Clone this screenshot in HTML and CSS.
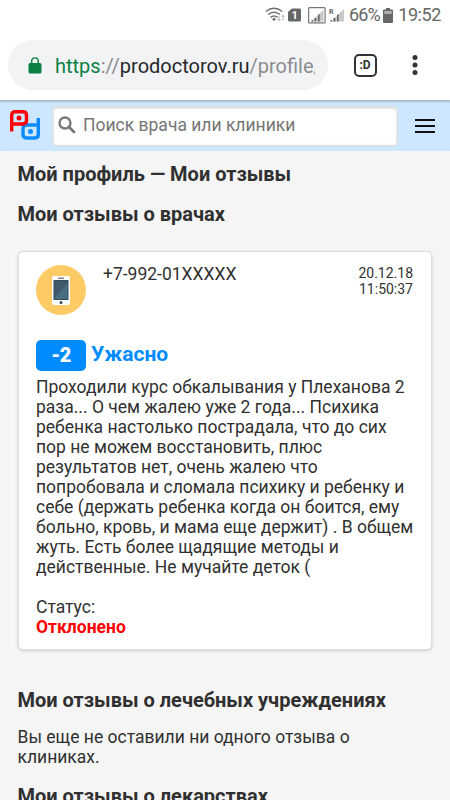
FILE: index.html
```html
<!DOCTYPE html>
<html lang="ru">
<head>
<meta charset="utf-8">
<title>Мои отзывы</title>
<link rel="stylesheet" href="styles.css">
</head>
<body>
<div class="status">
  <svg class="status-icons" width="82" height="24" viewBox="0 0 82 24">
    <g fill="none" stroke="#707070" stroke-width="1.5">
      <path d="M.8 8.500Q9 2 17.200 8.500"/><path d="M3 11.500Q9 6.800 15 11.500"/><path d="M5.500 14.300Q9 11.500 12.500 14.300"/>
    </g>
    <circle cx="9" cy="16.300" r="1.500" fill="#707070"/>
    <path d="M14 13v4.500m-1.500-1.500 1.500 1.700 1.500-1.700M18 17.500v-5m-1.500 1.500 1.500-1.700 1.500 1.700" fill="none" stroke="#aaa" stroke-width=".9"/>
    <path d="M27 5.500h7.500q1.500 0 1.500 1.500v10q0 1.500-1.500 1.500h-10q-1.500 0-1.500-1.500V9z" fill="#666"/>
    <text x="26.500" y="16" class="sim">1</text>
    <rect x="43.600" y="4.600" width="16.500" height="15.300" rx="1" fill="none" stroke="#777" stroke-width="1.200"/>
    <path d="M58.500 6.500v12H46.500z" fill="#c8c8c8"/>
    <path d="M46.500 17h1.500v1.500h-1.500zM49.500 15h1.800v3.500h-1.800zM53 11.500h1.600v7H53z" fill="#666"/>
    <path d="M79 6v12.500H66z" fill="#c8c8c8"/>
    <path d="M65.500 17h1.500v1.500h-1.500zM68.500 15h1.800v3.500h-1.800zM72 11.500h1.600v7H72z" fill="#666"/>
    <text x="64" y="10.500" class="roam">R</text>
  </svg>
  <span class="percent">66%</span>
  <svg class="battery" width="10" height="15" viewBox="0 0 10 15"><path d="M3 0h4v1.500h2q1 0 1 1V14q0 1-1 1H1q-1 0-1-1V2.500q0-1 1-1h2z" fill="#666"/><path d="M1.300 3h7.400v3H1.300z" fill="#b0b0b0"/></svg>
  <span class="clock">19:52</span>
</div>
<div class="browser">
  <div class="address">
    <svg width="14" height="17" viewBox="0 0 14 17"><rect x=".5" y="6" width="13" height="10.500" rx="1.500" fill="#0b8043"/><path d="M3.700 7V4.200a3.300 3.300 0 0 1 6.600 0V7" fill="none" stroke="#0b8043" stroke-width="1.400"/></svg>
    <div class="url"><span class="secure">https</span><span class="muted">://</span>prodoctorov.ru<span class="muted">/profile/</span></div>
  </div>
  <div class="tabs">:D</div>
  <svg class="dots" width="6" height="20" viewBox="0 0 6 20" fill="#303438"><circle cx="3" cy="2.500" r="2.500"/><circle cx="3" cy="10" r="2.500"/><circle cx="3" cy="17.500" r="2.500"/></svg>
</div>
<header class="site">
  <svg class="logo" width="30" height="30" viewBox="0 0 30 30" fill="none" stroke-width="3.400">
    <path d="M28.300 8v16.500q0 3.500-3.500 3.500H16.500q-3.500 0-3.500-3.500V18.500q0-3.500 3.500-3.500H28" stroke="#0c8bff"/>
    <path d="M1.700 21.500V5.200q0-3.500 3.500-3.500H13q3.500 0 3.500 3.500V10.500q0 3.500-3.500 3.500H2" stroke="#ff000a"/>
    <circle cx="9" cy="8" r="2.500" fill="#ff000a"/><circle cx="20.500" cy="21.500" r="2.500" fill="#0c8bff"/>
  </svg>
  <div class="search">
    <svg width="18" height="18" viewBox="0 0 18 18" fill="none" stroke="#777"><circle cx="7" cy="7" r="5.500" stroke-width="2.300"/><path d="m11 11 5 5" stroke-width="2.800" stroke-linecap="round"/></svg>
    <span>Поиск врача или клиники</span>
  </div>
  <svg class="menu" width="20" height="14" viewBox="0 0 20 14"><path d="M0 1h20M0 7h20M0 13h20" stroke="#111" stroke-width="2"/></svg>
</header>
<main>
  <h1>Мой профиль — Мои отзывы</h1>
  <h2>Мои отзывы о врачах</h2>
  <article class="card">
    <div class="card-head">
      <svg width="50" height="50" viewBox="0 0 50 50"><circle cx="25" cy="25" r="25" fill="#fdcb66"/><rect x="16" y="11" width="18" height="29" rx="2" fill="#fff"/><path d="M17.500 15h15v20h-15z" fill="#334a5e"/><path d="M18.500 16h13v18h-13z" fill="#40596b"/><path d="M31.500 18v16h-13v-1z" fill="#476d80"/><path d="M22 12.500h6V14h-6z" fill="#84868a"/><circle cx="25" cy="37.400" r="1.500" fill="#334a5e"/></svg>
      <span class="phone">+7-992-01XXXXX</span>
      <time>20.12.18<br>11:50:37</time>
    </div>
    <div class="rating"><b class="score">-2</b><b class="verdict">Ужасно</b></div>
    <p class="review">Проходили курс обкалывания у Плеханова 2<br>раза... О чем жалею уже 2 года... Психика<br>ребенка настолько пострадала, что до сих<br>пор не можем восстановить, плюс<br>результатов нет, очень жалею что<br>попробовала и сломала психику и ребенку и<br>себе (держать ребенка когда он боится, ему<br>больно, кровь, и мама еще держит) . В общем<br>жуть. Есть более щадящие методы и<br>действенные. Не мучайте деток (</p>
    <p class="state">Статус:<br><b>Отклонено</b></p>
  </article>
  <h2 class="clinics">Мои отзывы о лечебных учреждениях</h2>
  <p class="empty">Вы еще не оставили ни одного отзыва о<br>клиниках.</p>
  <h2 class="drugs">Мои отзывы о лекарствах</h2>
</main>
</body>
</html>
```
FILE: styles.css
```css
* { box-sizing: border-box; }
html, body { margin: 0; height: 800px; overflow: hidden; }
body { font: 17.5px/20px Roboto, sans-serif; color: #303030; background: #f5f5f5; white-space: nowrap; }
h1, h2, p { margin: 0; }
svg { flex: none; display: block; }
.status { height: 30px; background: #fff; display: flex; align-items: center; padding: 0 9px 0 265px; color: #666; font-size: 18px; }
.sim { font: bold 11px Roboto, sans-serif; fill: #fff; }
.roam { font: bold 7px Roboto, sans-serif; fill: #666; }
.percent { width: 34px; margin-left: 2px; letter-spacing: -.9px; }
.clock { letter-spacing: -.4px; }
.battery { margin: 1px 5px 0 1px; }
.browser { height: 70px; background: #fff; display: flex; align-items: center; padding-left: 8px; }
.address { width: 320px; height: 50px; border-radius: 25px; background: #f1f3f5; display: flex; align-items: center; padding-left: 20px; }
.url { width: 260px; margin-left: 13px; padding-top: 1px; overflow: hidden; font-size: 20px; line-height: 26px; color: #26282b; }
.secure { color: #0b8043; }
.muted { color: #8b8d90; }
.tabs { width: 23px; height: 23px; margin-left: 25.5px; border: 2px solid #303438; border-radius: 5px; font: bold 12px/19px Roboto, sans-serif; text-align: center; }
.dots { margin-left: 35.5px; }
.site { height: 51px; background: #cce7ff; display: flex; align-items: center; padding-left: 10px; box-shadow: inset 0 3px 2px -1px #a9bdcd; }
.logo { margin-bottom: 2px; }
.search { width: 346px; height: 40px; margin: 0 17px 0 12px; padding: 0 0 2px 5px; border: 1px solid #ddd; border-radius: 4px; background: #fff; box-shadow: inset 0 1px 3px #ccc; display: flex; align-items: center; gap: 7px; color: #757575; }
main { padding: 13px 18px 0 17.5px; }
h1, h2 { font-size: 20px; line-height: 20px; font-weight: 700; }
h2 { margin-top: 20px; }
.card { height: 399px; margin-top: 27px; padding: 13px 18px 0 17.5px; background: #fff; border: 1px solid #ddd; border-radius: 5px; box-shadow: 0 1px 3px #ccc; }
.card-head { display: flex; height: 75px; align-items: flex-start; }
.phone { margin: -1px 0 0 17px; }
time { margin: 0 0 0 auto; font-size: 14px; line-height: 16px; text-align: right; }
.rating { display: flex; align-items: center; height: 31px; font-size: 21px; }
.score { width: 50px; height: 31px; line-height: 30px; border-radius: 5px; background: #008cff; color: #fff; text-align: center; font-weight: 900; font-size: 20px; letter-spacing: -.5px; }
.verdict { margin: -3px 0 0 5px; color: #008cff; }
.review { margin-top: 6px; }
.state { margin-top: 20px; }
.state b { color: red; }
.clinics { margin-top: 40px; }
.empty { margin-top: 17px; }
.drugs { margin-top: 19px; }
```
